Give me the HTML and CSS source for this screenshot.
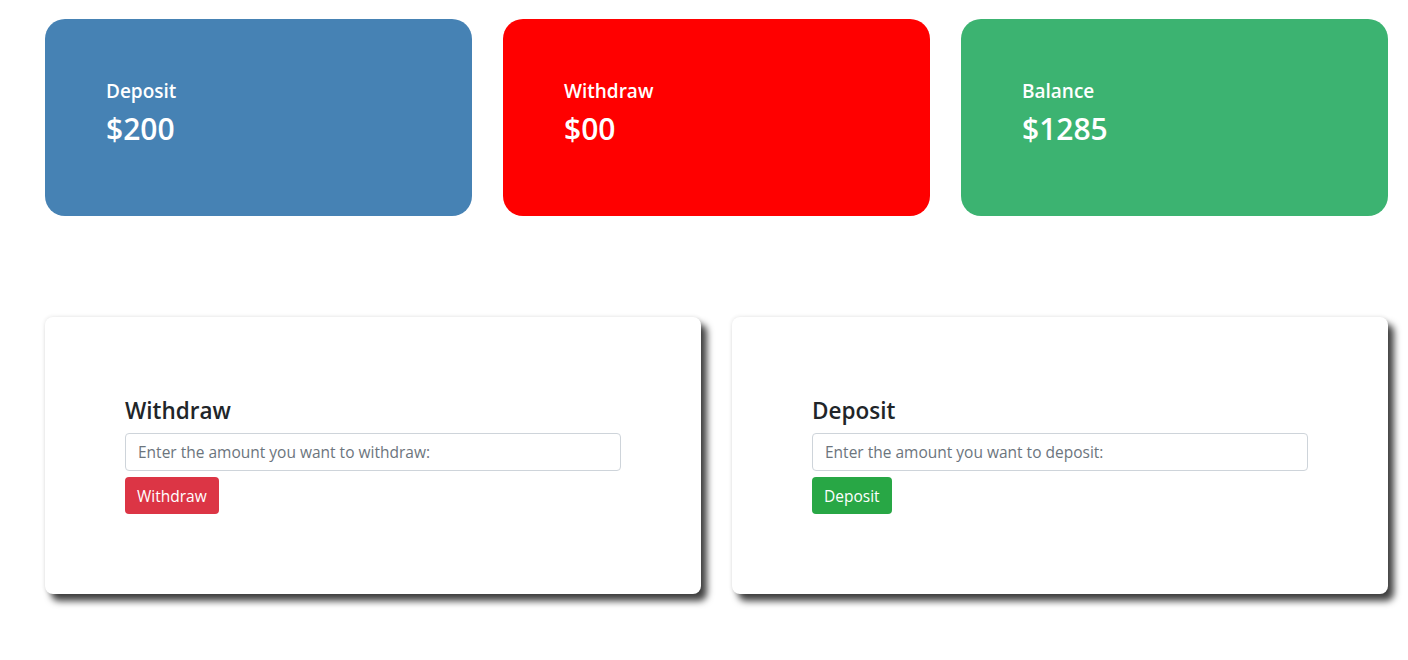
FILE: index.html
```html
<!DOCTYPE html>
<html>
<head>
<meta charset="utf-8">
<link rel="stylesheet" href="styles.css">
</head>
<body>
<div class="page">
  <div class="stats">
    <div class="stat stat-deposit">
      <div class="stat-label">Deposit</div>
      <div class="stat-value">$200</div>
    </div>
    <div class="stat stat-withdraw">
      <div class="stat-label">Withdraw</div>
      <div class="stat-value">$00</div>
    </div>
    <div class="stat stat-balance">
      <div class="stat-label">Balance</div>
      <div class="stat-value">$1285</div>
    </div>
  </div>
  <div class="forms">
    <div class="panel">
      <h4 class="panel-title">Withdraw</h4>
      <input class="field" type="text" placeholder="Enter the amount you want to withdraw:">
      <button class="btn btn-red">Withdraw</button>
    </div>
    <div class="panel">
      <h4 class="panel-title">Deposit</h4>
      <input class="field" type="text" placeholder="Enter the amount you want to deposit:">
      <button class="btn btn-green">Deposit</button>
    </div>
  </div>
</div>
</body>
</html>
```

FILE: styles.css
```css
* { box-sizing: border-box; }
html, body { margin: 0; padding: 0; background: #fff; }
body {
  font-family: "Segoe UI", "Open Sans", "Noto Sans", "Liberation Sans", sans-serif;
  color: #212529;
  font-size: 16px;
}
.page {
  padding: 19px 20px 60px 45px;
}
.stats {
  display: flex;
  gap: 31px;
}
.stat {
  flex: 1;
  height: 197px;
  border-radius: 20px;
  padding: 60px 61px;
  color: #fff;
}
.stat-deposit { background: #4682b4; }
.stat-withdraw { background: #ff0000; }
.stat-balance { background: #3cb371; }
.stat-label {
  font-size: 19px;
  font-weight: 600;
  line-height: 24px;
}
.stat-value {
  font-size: 30px;
  font-weight: 600;
  line-height: 38px;
  margin-top: 7px;
}
.forms {
  display: flex;
  gap: 31px;
  margin-top: 101px;
}
.panel {
  flex: 1;
  background: #fff;
  border-radius: 8px;
  padding: 80px;
  box-shadow: 6px 7px 7px rgba(0,0,0,0.75), 0 0 4px rgba(0,0,0,0.12);
  display: flex;
  flex-direction: column;
  align-items: flex-start;
}
.panel-title {
  margin: 0 0 8px;
  font-size: 22.5px;
  font-weight: 600;
  line-height: 28px;
}
.field {
  width: 100%;
  height: 38px;
  border: 1px solid #ced4da;
  border-radius: 4px;
  padding: 6px 12px;
  font-family: inherit;
  font-size: 15.5px;
  color: #495057;
}
.field::placeholder { color: #6c757d; }
.btn {
  margin-top: 6px;
  height: 37px;
  border: none;
  border-radius: 4px;
  padding: 0 12px;
  font-family: inherit;
  font-size: 15.5px;
  color: #fff;
}
.btn-red { background: #dc3545; }
.btn-green { background: #28a745; }
```
